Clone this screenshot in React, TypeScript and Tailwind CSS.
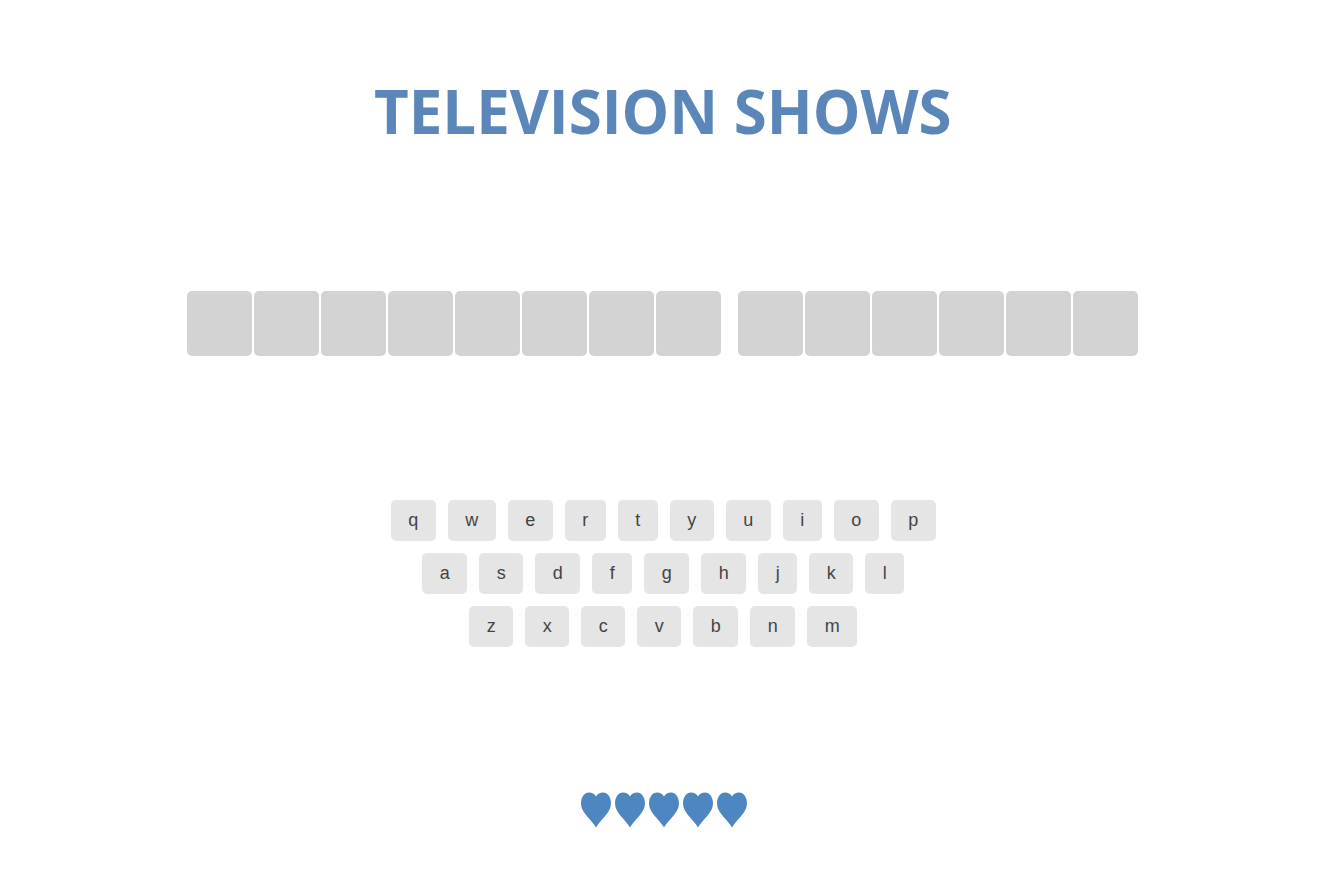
const rows = ['qwertyuiop', 'asdfghjkl', 'zxcvbnm']
const words = [8, 6]

function Heart() {
  return (
    <svg width="32" height="36" viewBox="0 0 32 36" className="shrink-0">
      <path
        d="M16 35.5C12 28 1 21 1 11.5C1 5 4.5 0.5 9 0.5C12 0.5 14.7 2 16 4.5C17.3 2 20 0.5 23 0.5C27.5 0.5 31 5 31 11.5C31 21 20 28 16 35.5Z"
        fill="#4d86c0"
      />
    </svg>
  )
}

export default function App() {
  return (
    <div className="flex min-h-[878px] w-[1325.4px] flex-col items-center bg-white">
      <h1 className="mt-[70px] font-['Open_Sans',sans-serif] text-[60px] font-bold leading-[82px] text-[#5b86b9]">
        TELEVISION SHOWS
      </h1>

      {/* Answer tiles */}
      <div className="mt-[139px] flex gap-[17px]">
        {words.map((n, w) => (
          <div key={w} className="flex gap-[2px]">
            {Array.from({ length: n }).map((_, i) => (
              <div key={i} className="h-[65px] w-[65px] rounded-[5px] bg-[#d3d3d3]" />
            ))}
          </div>
        ))}
      </div>

      {/* Keyboard */}
      <div className="mt-[144px] ml-[1px] flex flex-col gap-[12px]">
        {rows.map((row) => (
          <div key={row} className="flex justify-center gap-[12px]">
            {row.split('').map((k) => (
              <button
                key={k}
                className="h-[41px] rounded-[5px] bg-[#e5e5e5] px-[17.5px] font-['Liberation_Sans',sans-serif] text-[18px] text-[#444444]"
              >
                {k}
              </button>
            ))}
          </div>
        ))}
      </div>

      {/* Lives */}
      <div className="mt-[145px] ml-[2px] flex gap-[2px]">
        {[0, 1, 2, 3, 4].map((i) => (
          <Heart key={i} />
        ))}
      </div>
    </div>
  )
}
